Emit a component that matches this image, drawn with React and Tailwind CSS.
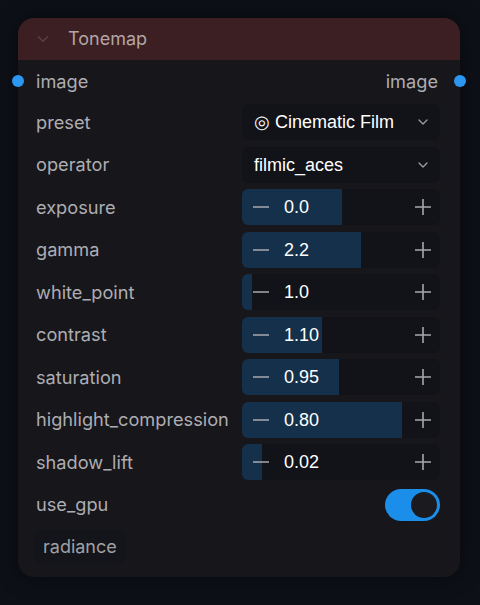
import React from "react";

const F = { fontFamily: "Inter, 'Noto Sans', sans-serif" };
const V = { fontFamily: "'Liberation Sans', Arial, sans-serif" };

function Chevron({ className, size = 14 }) {
  return (
    <svg className={className} width={size} height={size} viewBox="0 0 24 24" fill="none" stroke="currentColor" strokeWidth="2" strokeLinecap="round" strokeLinejoin="round">
      <path d="M6 9l6 6 6-6" />
    </svg>
  );
}

function Label({ children }) {
  return <span className="text-[18.2px] text-[#adadb2] leading-none" style={F}>{children}</span>;
}

function Select({ value }) {
  return (
    <div className="w-[198px] h-9 rounded-md bg-[#121318] flex items-center pl-3 pr-[9px] justify-between">
      <span className="text-[18px] text-white leading-none" style={V}>{value}</span>
      <Chevron className="text-[#9a9aa0]" size={16} />
    </div>
  );
}

function Num({ value, pct }) {
  return (
    <div className="relative w-[198px] h-9 rounded-md bg-[#111318] overflow-hidden flex items-center">
      <div className="absolute left-0 top-0 bottom-0 bg-[#15304a]" style={{ width: `${pct}%` }} />
      <div className="relative flex items-center w-full pl-[10px] pr-[8px]">
        <svg width="18" height="18" viewBox="0 0 18 18"><path d="M1 9h16" stroke="#a8a8ad" strokeWidth="1.6" /></svg>
        <span className="ml-[14px] text-[18px] text-white leading-none" style={V}>{value}</span>
        <svg className="ml-auto" width="18" height="18" viewBox="0 0 18 18"><path d="M1 9h16M9 1v16" stroke="#a8a8ad" strokeWidth="1.6" /></svg>
      </div>
    </div>
  );
}

function Row({ label, children }) {
  return (
    <div className="h-9 flex items-center justify-between">
      <Label>{label}</Label>
      {children}
    </div>
  );
}

export default function App() {
  const nums = [
    ["exposure", "0.0", 50.5],
    ["gamma", "2.2", 60],
    ["white_point", "1.0", 5],
    ["contrast", "1.10", 40.5],
    ["saturation", "0.95", 49],
    ["highlight_compression", "0.80", 81],
    ["shadow_lift", "0.02", 10],
  ];
  return (
    <div className="w-[480px] h-[605px] bg-[#0d1017] pt-[18px] pl-[18px]">
      <div className="relative w-[442px] h-[559px] rounded-[16px] bg-[#17161b] shadow-[0_0_20px_rgba(0,0,0,0.5)]">
        <div className="h-[42px] rounded-t-[16px] bg-[#3b1f22] flex items-center pl-[16px]">
          <Chevron className="text-[#5e3f41]" size={18} />
          <span className="ml-[16px] text-[18px] text-[#b3a5a4] leading-none" style={F}>Tonemap</span>
        </div>
        <div className="absolute left-[-6px] top-[57px] w-3 h-3 rounded-full bg-[#2c97f0]" />
        <div className="absolute right-[-6px] top-[57px] w-3 h-3 rounded-full bg-[#2c97f0]" />
        <div className="pt-[3px] pl-[18px] pr-[20px] flex flex-col">
          <div className="h-9 flex items-center justify-between pr-[2px]">
            <Label>image</Label>
            <Label>image</Label>
          </div>
          <div className="mt-[5px] flex flex-col gap-[6.5px]">
            <Row label="preset"><Select value="◎ Cinematic Film" /></Row>
            <Row label="operator"><Select value="filmic_aces" /></Row>
            {nums.map(([l, v, p]) => (
              <Row key={l} label={l}><Num value={v} pct={p} /></Row>
            ))}
            <Row label="use_gpu">
              <div className="w-[55px] h-[32px] rounded-full bg-[#1a8ee9] flex items-center justify-end pr-[3px]">
                <div className="w-[26px] h-[26px] rounded-full bg-[#1b1a1e]" />
              </div>
            </Row>
            <div className="h-9 flex items-center">
              <div className="-ml-[3px] h-[34px] px-[10px] rounded-[10px] bg-[#13151a] flex items-center">
                <span className="text-[18px] text-[#a0a0a5] leading-none" style={F}>radiance</span>
              </div>
            </div>
          </div>
        </div>
      </div>
    </div>
  );
}
